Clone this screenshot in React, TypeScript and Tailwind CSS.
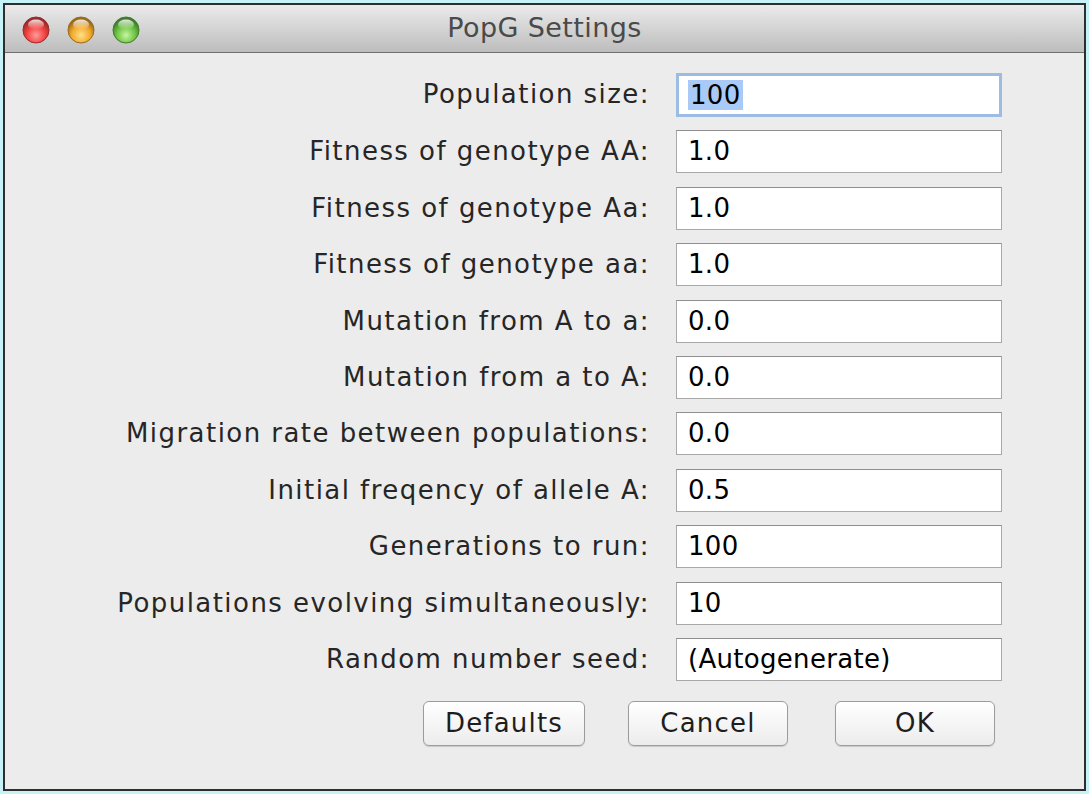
import React from 'react'

const fields: { label: string; value: string }[] = [
  { label: 'Population size:', value: '100' },
  { label: 'Fitness of genotype AA:', value: '1.0' },
  { label: 'Fitness of genotype Aa:', value: '1.0' },
  { label: 'Fitness of genotype aa:', value: '1.0' },
  { label: 'Mutation from A to a:', value: '0.0' },
  { label: 'Mutation from a to A:', value: '0.0' },
  { label: 'Migration rate between populations:', value: '0.0' },
  { label: 'Initial freqency of allele A:', value: '0.5' },
  { label: 'Generations to run:', value: '100' },
  { label: 'Populations evolving simultaneously:', value: '10' },
  { label: 'Random number seed:', value: '(Autogenerate)' },
]

function Light({ id, light, mid, dark }: { id: string; light: string; mid: string; dark: string }) {
  return (
    <svg width="28" height="28" viewBox="0 0 28 28">
      <defs>
        <radialGradient id={`${id}-g`} cx="50%" cy="70%" r="60%">
          <stop offset="0%" stopColor={light} />
          <stop offset="60%" stopColor={mid} />
          <stop offset="100%" stopColor={dark} />
        </radialGradient>
        <linearGradient id={`${id}-h`} x1="0" y1="0" x2="0" y2="1">
          <stop offset="0%" stopColor="#ffffff" stopOpacity="0.85" />
          <stop offset="100%" stopColor="#ffffff" stopOpacity="0" />
        </linearGradient>
      </defs>
      <circle cx="14" cy="14" r="13" fill={`url(#${id}-g)`} stroke={dark} strokeWidth="1" />
      <ellipse cx="14" cy="8.5" rx="8" ry="5" fill={`url(#${id}-h)`} />
    </svg>
  )
}

function Button({ label, className }: { label: string; className: string }) {
  return (
    <button
      className={`h-[45px] rounded-[6px] border border-[#9c9c9c] bg-gradient-to-b from-white to-[#ececec] text-[26px] tracking-[1.2px] text-[#1e1e1e] shadow-[0_1px_1px_rgba(0,0,0,0.15)] ${className}`}
    >
      {label}
    </button>
  )
}

export default function App() {
  return (
    <div
      className="w-[1089px] h-[794px] bg-[#c6f3f7] p-[3px]"
      style={{ fontFamily: '"DejaVu Sans", "Liberation Sans", sans-serif' }}
    >
      <div className="flex flex-col h-full border-2 border-[#2e2e2e] bg-[#ececec]">
        <div className="relative flex items-center justify-center h-[48px] bg-gradient-to-b from-[#ebebeb] to-[#bdbdbd] border-b border-[#6f6f6f]">
          <div className="absolute left-[17px] top-[11px] flex gap-[17px]">
            <Light id="r" light="#ff9a9a" mid="#f2413e" dark="#9b2a2a" />
            <Light id="y" light="#ffe08a" mid="#f3a92b" dark="#9a6a1c" />
            <Light id="g" light="#c8f5a0" mid="#6cc442" dark="#3f7d2a" />
          </div>
          <span className="text-[27px] text-[#4a4a4a] tracking-[0.4px]">PopG Settings</span>
        </div>

        <div className="flex-1 pt-[20px]">
          <div className="grid grid-cols-[1fr_326px] gap-x-[26px] gap-y-[13.4px] pr-[82px]">
            {fields.map((f, i) => (
              <React.Fragment key={f.label}>
                <div className="flex items-center justify-end h-[43px] text-[26px] tracking-[1.45px] text-[#262626]">
                  {f.label}
                </div>
                {i === 0 ? (
                  <div className="flex items-center h-[44px] border-[3px] border-[#9dbce4] bg-white pl-[9px] text-[26px] tracking-[0.3px] text-black">
                    <span className="bg-[#a9c9f7] px-[2px] leading-[30px]">{f.value}</span>
                  </div>
                ) : (
                  <div className="flex items-center h-[43px] border border-[#a8a8a8] border-t-[#8f8f8f] bg-white pl-[11px] text-[26px] tracking-[0.3px] text-black">
                    {f.value}
                  </div>
                )}
              </React.Fragment>
            ))}
          </div>

          <div className="flex mt-[20px] pl-[418px]">
            <Button label="Defaults" className="w-[162px]" />
            <Button label="Cancel" className="w-[160px] ml-[43px]" />
            <Button label="OK" className="w-[160px] ml-[47px]" />
          </div>
        </div>
      </div>
    </div>
  )
}
